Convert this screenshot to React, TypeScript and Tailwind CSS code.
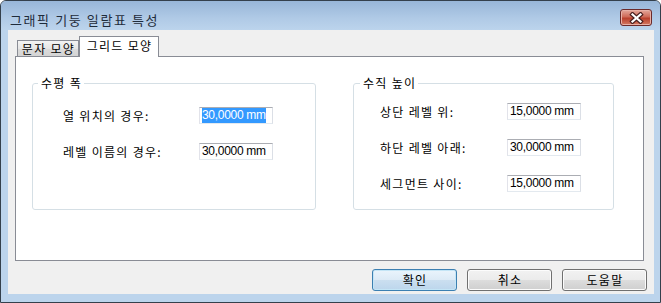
import React from 'react';

const inputBox =
  'w-[74px] h-[17px] flex items-center pl-[2px] bg-white border border-[#abadb3] border-l-[#e2e3ea] border-r-[#dbdfe6] border-b-[#e3e9ef] font-["Liberation_Sans",sans-serif] text-[12px] tracking-[-0.3px] leading-[15px] text-black whitespace-nowrap';

function Field({ label, value, labelWidth, focused }: { label: string; value: string; labelWidth: string; focused?: boolean }) {
  return (
    <div className="flex items-center h-[17px]">
      <span className={`${labelWidth} leading-[14px] whitespace-nowrap`}>{label}</span>
      {focused ? (
        <div className={`${inputBox} border-[#569de5] border-l-[#569de5] border-r-[#569de5] border-b-[#569de5]`}>
          <span className="bg-[#3399ff] text-white h-[15px] leading-[15px]">{value}</span>
        </div>
      ) : (
        <div className={inputBox}>{value}</div>
      )}
    </div>
  );
}

function GroupBox({ title, width, titleLeft, children }: { title: string; width: string; titleLeft: string; children: React.ReactNode }) {
  return (
    <div className={`relative ${width} h-[127px] border border-[#d5dfe5] rounded-[3px]`}>
      {/* caption sits over the top border */}
      <span className={`absolute top-[-8px] ${titleLeft} pl-[3px] pr-[2px] bg-white leading-[14px]`}>{title}</span>
      {children}
    </div>
  );
}

function Button({ label, primary }: { label: string; primary?: boolean }) {
  return (
    <div
      className={
        primary
          ? 'w-[85px] h-[22px] flex items-center justify-center pl-[1px] rounded-[3px] border border-[#3c7fb1] bg-[linear-gradient(#eaf4fc,#dceaf6_50%,#cbdff0_50%,#bcd6ec)] shadow-[inset_0_0_0_1px_#c4e5f6]'
          : 'w-[85px] h-[22px] flex items-center justify-center pl-[1px] rounded-[3px] border border-[#707070] bg-[linear-gradient(#f2f2f2,#ebebeb_50%,#dddddd_50%,#cfcfcf)] shadow-[inset_0_0_0_1px_#fcfcfc]'
      }
    >
      {label}
    </div>
  );
}

export default function App() {
  return (
    <div className="w-[661px] h-[303px] flex flex-col border border-[#34404c] rounded-t-[6px] bg-[#bcd4ec] text-[12px] tracking-[1.3px] text-black font-['Noto_Sans_CJK_KR','Noto_Sans',sans-serif] overflow-hidden">
      {/* title bar */}
      <div className="h-[29px] shrink-0 flex items-start pl-[9px] pr-[8px] bg-[linear-gradient(#98b6d8,#b0cae6_60%,#bcd4ec)]">
        <span className="mt-[11px] leading-[15px] text-[13px] tracking-[1.6px] text-[#1e2b3a]">그래픽 기둥 일람표 특성</span>
        <div className="flex-1" />
        <div className="mt-[8px] w-[32px] h-[17px] flex items-center justify-center rounded-[3px] border border-[#6b2a2a] bg-[linear-gradient(#e4a89c,#cf6a58_45%,#b9402d_55%,#d47a62)] shadow-[inset_0_0_0_1px_#e8b0a6]">
          <svg width="15" height="12" viewBox="0 0 15 12">
            <path d="M3.5 2.5 L11.5 9.5 M11.5 2.5 L3.5 9.5" stroke="#4a2020" strokeWidth="4.5" strokeLinecap="square" />
            <path d="M3.5 2.5 L11.5 9.5 M11.5 2.5 L3.5 9.5" stroke="#ffffff" strokeWidth="2.2" strokeLinecap="square" />
          </svg>
        </div>
      </div>

      {/* client area */}
      <div className="flex-1 flex pl-[7px] pr-[6px] pb-[8px]">
        <div className="flex-1 flex flex-col bg-[#f0f0f0] pt-[6px] pl-[7px]">
          {/* tabs */}
          <div className="relative z-10 flex items-end h-[20px] pl-[2px]">
            <div className="w-[62px] h-[16px] flex items-center justify-center pl-[1px] border border-b-0 border-[#898c95] bg-[linear-gradient(#f3f3f3,#e6e6e6_50%,#dcdcdc_50%,#d4d4d4)] leading-[14px] whitespace-nowrap">
              문자 모양
            </div>
            <div className="w-[80px] h-[21px] -mb-px flex items-center justify-center pl-[1px] border border-b-0 border-[#898c95] bg-white leading-[14px] pb-[2px] whitespace-nowrap">
              그리드 모양
            </div>
          </div>

          {/* tab page */}
          <div className="w-[629px] h-[205px] flex gap-[37px] pt-[26px] pl-[16px] border border-[#898c95] bg-white">
            <GroupBox title="수평 폭" width="w-[284px]" titleLeft="left-[5px]">
              <div className="flex flex-col gap-[19px] pt-[23px] pl-[30px]">
                <Field label="열 위치의 경우:" value="30,0000 mm" labelWidth="w-[136px]" focused />
                <Field label="레벨 이름의 경우:" value="30,0000 mm" labelWidth="w-[136px]" />
              </div>
            </GroupBox>
            <GroupBox title="수직 높이" width="w-[261px]" titleLeft="left-[6px]">
              <div className="flex flex-col gap-[19px] pt-[19px] pl-[26px]">
                <Field label="상단 레벨 위:" value="15,0000 mm" labelWidth="w-[127px]" />
                <Field label="하단 레벨 아래:" value="30,0000 mm" labelWidth="w-[127px]" />
                <Field label="세그먼트 사이:" value="15,0000 mm" labelWidth="w-[127px]" />
              </div>
            </GroupBox>
          </div>

          {/* dialog buttons */}
          <div className="flex justify-end gap-[10px] pr-[7px] mt-[8px]">
            <Button label="확인" primary />
            <Button label="취소" />
            <Button label="도움말" />
          </div>
        </div>
      </div>
    </div>
  );
}
